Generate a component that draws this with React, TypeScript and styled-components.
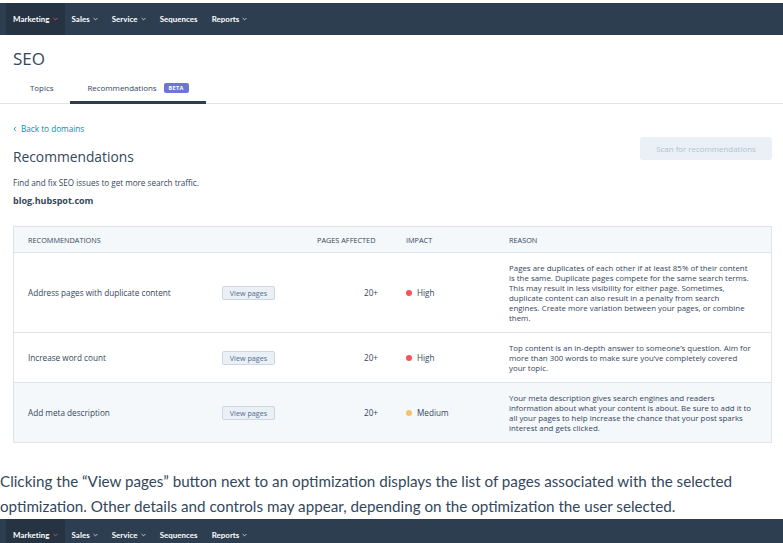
import React from "react";
import styled, { createGlobalStyle } from "styled-components";

const Global = createGlobalStyle`
  html, body { margin: 0; padding: 0; background: #ffffff; }
  body { font-family: "Open Sans", Lato, sans-serif; color: #33475b; }
  * { box-sizing: border-box; }
`;

const Page = styled.div`
  width: 783px;
  overflow: hidden;
`;

const Shot = styled.div<{ $top?: number }>`
  padding-top: ${(p) => p.$top ?? 0}px;
`;

const NavBar = styled.nav`
  height: 32px;
  background: #2d3e50;
  display: flex;
  align-items: stretch;
  padding-left: 6px;
`;

const NavItem = styled.div<{ $active?: boolean }>`
  display: flex;
  align-items: center;
  gap: 3px;
  padding: 0 7px;
  background: ${(p) => (p.$active ? "#253342" : "transparent")};
  color: #ffffff;
  font-family: Lato, sans-serif;
  font-weight: 700;
  font-size: 7.9px;
  letter-spacing: 0.05px;
`;

const Chevron = ({ color }: { color: string }) => (
  <svg width="5" height="4" viewBox="0 0 5 4">
    <path d="M0.6 1 L2.5 2.9 L4.4 1" fill="none" stroke={color} strokeWidth="0.9" />
  </svg>
);

const Header = styled.div`
  padding: 13px 0 0;
`;

const Title = styled.h1`
  margin: 0 0 0 13px;
  font-family: "Open Sans", sans-serif;
  font-weight: 400;
  font-size: 17px;
  line-height: 22px;
  color: #33475b;
`;

const Tabs = styled.div`
  margin-top: 4px;
  display: flex;
  padding-left: 13px;
  border-bottom: 1px solid #dfe3eb;
`;

const Tab = styled.div<{ $active?: boolean }>`
  display: flex;
  align-items: center;
  gap: 7px;
  padding: 9px 17px 8px;
  line-height: 10px;
  font-size: 7.9px;
  color: #33475b;
  border-bottom: 3px solid ${(p) => (p.$active ? "#2d3e50" : "transparent")};
  margin-bottom: -1px;
`;

const Beta = styled.span`
  background: #6a78d1;
  color: #ffffff;
  font-size: 5.5px;
  font-weight: 700;
  letter-spacing: 0.3px;
  padding: 2px 5px;
  border-radius: 2px;
  line-height: 6px;
`;

const Content = styled.div`
  padding: 20px 11px 0 13px;
`;

const BackLink = styled.div`
  color: #0091ae;
  font-size: 8.2px;
  line-height: 10px;
  display: flex;
  align-items: center;
  gap: 4px;
`;

const TopRow = styled.div`
  margin-top: 3px;
  display: flex;
  justify-content: space-between;
  align-items: flex-start;
`;

const SubTitle = styled.h2`
  margin: 11px 0 0;
  font-weight: 400;
  font-size: 13.8px;
  line-height: 18px;
  color: #33475b;
`;

const ScanButton = styled.button`
  width: 132px;
  height: 23px;
  border: none;
  border-radius: 3px;
  background: #eaf0f6;
  color: #b0c1d4;
  font-family: "Open Sans", sans-serif;
  font-size: 7.9px;
  padding: 0;
`;

const Desc = styled.p`
  margin: 12px 0 0;
  font-size: 8.1px;
  line-height: 10px;
  color: #33475b;
`;

const Domain = styled.p`
  margin: 7px 0 0;
  font-size: 9px;
  font-weight: 700;
  line-height: 12px;
  color: #33475b;
`;

const Table = styled.div`
  margin-top: 19px;
  border: 1px solid #dfe3eb;
  border-bottom: none;
`;

const cols = "208px 90px 80px 103px 1fr";

const HeadRow = styled.div`
  display: grid;
  grid-template-columns: ${cols};
  height: 26px;
  background: #f5f8fa;
  border-bottom: 1px solid #dfe3eb;
  align-items: center;
  font-size: 7.3px;
  text-transform: uppercase;
  color: #33475b;
`;

const HeadCell = styled.div<{ $pl?: number }>`
  padding-left: ${(p) => p.$pl ?? 14}px;
`;

const Row = styled.div<{ $shade?: boolean }>`
  display: grid;
  grid-template-columns: ${cols};
  align-items: center;
  background: ${(p) => (p.$shade ? "#f5f8fa" : "#ffffff")};
  border-bottom: 1px solid #dfe3eb;
  font-size: 8.2px;
  color: #33475b;
`;

const NameCell = styled.div`
  padding-left: 14px;
`;

const ViewButton = styled.button`
  justify-self: start;
  width: 53px;
  height: 14px;
  background: #eaf0f6;
  border: 1px solid #cbd6e2;
  border-radius: 2px;
  color: #516f90;
  font-family: "Open Sans", sans-serif;
  font-size: 7.2px;
  padding: 0;
`;

const PagesCell = styled.div`
  text-align: right;
  padding-right: 14px;
`;

const ImpactCell = styled.div`
  display: flex;
  align-items: center;
  gap: 5px;
  padding-left: 14px;
`;

const Dot = styled.span<{ $color: string }>`
  width: 6px;
  height: 6px;
  border-radius: 50%;
  background: ${(p) => p.$color};
`;

const ReasonCell = styled.div`
  padding: 9.5px 10px 9.5px 14px;
  line-height: 10px;
  font-size: 7.9px;
`;

const ReasonLine = styled.span`
  display: block;
  white-space: nowrap;
`;

const Paragraph = styled.p`
  margin: 26px 0 0;
  font-family: Lato, sans-serif;
  font-size: 15.2px;
  line-height: 25px;
  color: #33475b;
`;

const navItems = [
  { label: "Marketing", active: true, chevron: "#f2545b" },
  { label: "Sales", chevron: "#cbd6e2" },
  { label: "Service", chevron: "#cbd6e2" },
  { label: "Sequences" },
  { label: "Reports", chevron: "#cbd6e2" },
];

const Nav = () => (
  <NavBar>
    {navItems.map((n) => (
      <NavItem key={n.label} $active={n.active}>
        {n.label}
        {n.chevron && <Chevron color={n.chevron} />}
      </NavItem>
    ))}
  </NavBar>
);

const rows = [
  {
    name: "Address pages with duplicate content",
    impact: "High",
    color: "#f2545b",
    reason: [
      "Pages are duplicates of each other if at least 85% of their content",
      "is the same. Duplicate pages compete for the same search terms.",
      "This may result in less visibility for either page. Sometimes,",
      "duplicate content can also result in a penalty from search",
      "engines. Create more variation between your pages, or combine",
      "them.",
    ],
  },
  {
    name: "Increase word count",
    impact: "High",
    color: "#f2545b",
    reason: [
      "Top content is an in-depth answer to someone’s question. Aim for",
      "more than 300 words to make sure you’ve completely covered",
      "your topic.",
    ],
  },
  {
    name: "Add meta description",
    impact: "Medium",
    color: "#f5c26b",
    shade: true,
    reason: [
      "Your meta description gives search engines and readers",
      "information about what your content is about. Be sure to add it to",
      "all your pages to help increase the chance that your post sparks",
      "interest and gets clicked.",
    ],
  },
];

export default function App() {
  return (
    <Page>
      <Global />
      <Shot $top={3}>
        <Nav />
        <Header>
          <Title>SEO</Title>
          <Tabs>
            <Tab>Topics</Tab>
            <Tab $active>
              Recommendations <Beta>BETA</Beta>
            </Tab>
          </Tabs>
        </Header>
        <Content>
          <BackLink>
            <svg width="4" height="6" viewBox="0 0 4 6">
              <path d="M3 0.8 L1 3 L3 5.2" fill="none" stroke="#0091ae" strokeWidth="0.8" />
            </svg>
            Back to domains
          </BackLink>
          <TopRow>
            <SubTitle>Recommendations</SubTitle>
            <ScanButton>Scan for recommendations</ScanButton>
          </TopRow>
          <Desc>Find and fix SEO issues to get more search traffic.</Desc>
          <Domain>blog.hubspot.com</Domain>
          <Table>
            <HeadRow>
              <HeadCell>Recommendations</HeadCell>
              <HeadCell />
              <HeadCell $pl={5}>Pages affected</HeadCell>
              <HeadCell>Impact</HeadCell>
              <HeadCell>Reason</HeadCell>
            </HeadRow>
            {rows.map((r) => (
              <Row key={r.name} $shade={r.shade}>
                <NameCell>{r.name}</NameCell>
                <ViewButton>View pages</ViewButton>
                <PagesCell>20+</PagesCell>
                <ImpactCell>
                  <Dot $color={r.color} />
                  {r.impact}
                </ImpactCell>
                <ReasonCell>
                  {r.reason.map((line) => (
                    <ReasonLine key={line}>{line}</ReasonLine>
                  ))}
                </ReasonCell>
              </Row>
            ))}
          </Table>
        </Content>
      </Shot>
      <Paragraph>
        Clicking the “View pages” button next to an optimization displays the list of pages associated with the
        selected optimization. Other details and controls may appear, depending on the optimization the user
        selected.
      </Paragraph>
      <Shot>
        <Nav />
      </Shot>
    </Page>
  );
}
